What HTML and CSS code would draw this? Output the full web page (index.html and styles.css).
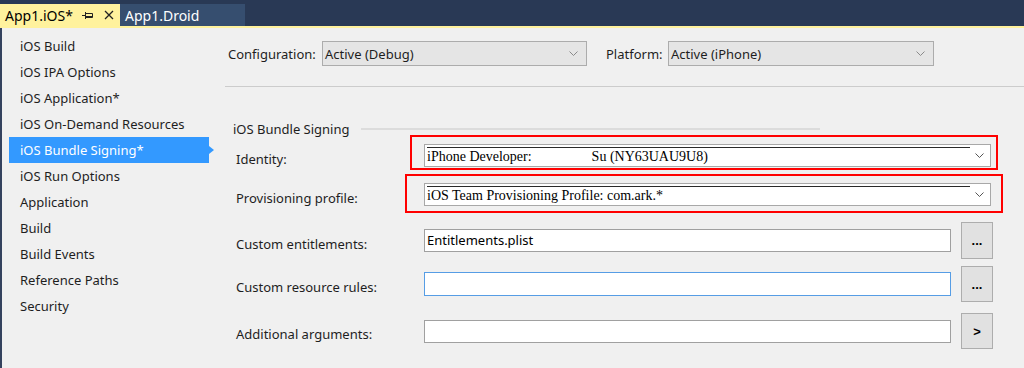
FILE: index.html
```html
<!DOCTYPE html>
<html lang="en">
<head>
    <meta charset="UTF-8">
    <title>App1.iOS - Project Options</title>
    <link rel="stylesheet" href="styles.css">
</head>
<body>

    <!-- Document tabs -->
    <div class="tabbar">
        <div class="tab active">
            <span>App1.iOS*</span>
            <svg class="pin" width="11" height="7" viewBox="0 0 11 7"><path d="M0 3.5H3.5 M3.5 0V7 M3.5 1.5H10.5V5.5H3.5" fill="none" stroke="#222" stroke-width="1"/><path d="M3.5 4.5H10.5" stroke="#222"/></svg>
            <svg class="close" width="10" height="10" viewBox="0 0 10 10"><path d="M1 1L9 9M9 1L1 9" stroke="#222" stroke-width="1.3"/></svg>
        </div>
        <div class="tab">App1.Droid</div>
    </div>

    <div class="page">
        <!-- Left navigation -->
        <ul class="nav">
            <li>iOS Build</li>
            <li>iOS IPA Options</li>
            <li>iOS Application*</li>
            <li>iOS On-Demand Resources</li>
            <li class="selected">iOS Bundle Signing*</li>
            <li>iOS Run Options</li>
            <li>Application</li>
            <li>Build</li>
            <li>Build Events</li>
            <li>Reference Paths</li>
            <li>Security</li>
        </ul>

        <div class="content">
            <!-- Configuration / Platform bar -->
            <div class="config">
                <span class="config-label">Configuration:</span>
                <div class="dropdown dropdown-config">
                    <span>Active (Debug)</span>
                    <svg width="9" height="5" viewBox="0 0 9 5"><path d="M0.5 0.5L4.5 4.5L8.5 0.5" fill="none" stroke="#8a8a8a"/></svg>
                </div>
                <span class="config-label platform-label">Platform:</span>
                <div class="dropdown dropdown-platform">
                    <span>Active (iPhone)</span>
                    <svg width="9" height="5" viewBox="0 0 9 5"><path d="M0.5 0.5L4.5 4.5L8.5 0.5" fill="none" stroke="#8a8a8a"/></svg>
                </div>
            </div>

            <!-- Bundle signing group -->
            <div class="group">
                <div class="group-title">
                    <span>iOS Bundle Signing</span>
                    <i class="rule"></i>
                </div>

                <div class="form">
                    <div class="row row-identity">
                        <label>Identity:</label>
                        <div class="combo">
                            <span class="combo-text">iPhone Developer:<span class="gap"></span>Su (NY63UAU9U8)</span>
                            <svg width="9" height="5" viewBox="0 0 9 5"><path d="M0.5 0.5L4.5 4.5L8.5 0.5" fill="none" stroke="#555"/></svg>
                            <span class="mark mark-identity"></span>
                        </div>
                    </div>

                    <div class="row row-profile">
                        <label>Provisioning profile:</label>
                        <div class="combo">
                            <span class="combo-text">iOS Team Provisioning Profile: com.ark.*</span>
                            <svg width="9" height="5" viewBox="0 0 9 5"><path d="M0.5 0.5L4.5 4.5L8.5 0.5" fill="none" stroke="#555"/></svg>
                            <span class="mark mark-profile"></span>
                        </div>
                    </div>

                    <div class="row row-entitlements">
                        <label>Custom entitlements:</label>
                        <div class="field">Entitlements.plist</div>
                        <button class="browse">...</button>
                    </div>

                    <div class="row row-rules">
                        <label>Custom resource rules:</label>
                        <div class="field focused"></div>
                        <button class="browse">...</button>
                    </div>

                    <div class="row row-args">
                        <label>Additional arguments:</label>
                        <div class="field"></div>
                        <button class="browse">&gt;</button>
                    </div>
                </div>
            </div>
        </div>
    </div>

</body>
</html>
```

FILE: styles.css
```css
body {
    margin: 0;
    font-family: 'Noto Sans', sans-serif;
    font-size: 13px;
    color: #1e1e1e;
    background-color: #f0f0f0;
    overflow: hidden;
}

/* Document tabs */
.tabbar {
    height: 28px;
    box-sizing: border-box;
    padding-top: 4px;
    background-color: #293955;
    border-bottom: 2px solid #fff29d;
    display: flex;
    align-items: stretch;
}
.tab {
    display: flex;
    align-items: center;
    padding: 0 0 0 5px;
    font-size: 14px;
    color: #fff;
    background-color: #364e6f;
    width: 125px;
    box-sizing: border-box;
}
.tab.active {
    background-color: #fff29d;
    color: #000;
    width: 120px;
}
.tab .pin {
    margin-left: 9px;
}
.tab .close {
    margin-left: 11px;
}

/* Page body */
.page {
    display: flex;
    height: 340px;
    border-left: 2px solid #34425e;
}

/* Left navigation */
.nav {
    list-style: none;
    margin: 0;
    padding: 5px 0 0 0;
    width: 210px;
    flex-shrink: 0;
}
.nav li {
    position: relative;
    height: 26px;
    line-height: 26px;
    width: 200px;
    margin-left: 7px;
    padding-left: 11px;
    box-sizing: border-box;
    white-space: nowrap;
}
.nav li.selected {
    background-color: #3399ff;
    color: #fff;
}
.nav li.selected::after {
    content: '';
    position: absolute;
    right: -5px;
    top: 9px;
    border-top: 4px solid transparent;
    border-bottom: 4px solid transparent;
    border-left: 5px solid #3399ff;
}

.content {
    flex: 1;
}

/* Configuration bar */
.config {
    display: flex;
    align-items: center;
    margin-left: 13px;
    padding: 13px 0 20px 3px;
    border-bottom: 1px solid #cccccc;
}
.config-label {
    width: 94px;
    flex-shrink: 0;
}
.platform-label {
    width: 62px;
    margin-left: 19px;
}
.dropdown {
    height: 25px;
    box-sizing: border-box;
    border: 1px solid #acacac;
    background-color: #e5e5e5;
    display: flex;
    align-items: center;
    justify-content: space-between;
    padding: 0 8px 0 2px;
}
.dropdown-config {
    width: 265px;
}
.dropdown-platform {
    width: 266px;
}

/* Group */
.group {
    margin-top: 34px;
    padding-left: 21px;
}
.group-title {
    display: flex;
    align-items: center;
    width: 587px;
    height: 16px;
    line-height: 16px;
}
.group-title .rule {
    flex: 1;
    height: 2px;
    margin-left: 11px;
    background-color: #dcdcdc;
}

.form {
    padding-left: 3px;
}
.row {
    display: flex;
    align-items: center;
}
.row label {
    width: 188px;
    flex-shrink: 0;
    padding-top: 6px;
    line-height: 16px;
}
.row-identity {
    margin-top: 7px;
}
.row-profile {
    margin-top: 16px;
}
.row-entitlements {
    margin-top: 16px;
}
.row-rules {
    margin-top: 7px;
}
.row-args {
    margin-top: 11px;
}

/* Signing combo boxes */
.combo {
    position: relative;
    width: 567px;
    height: 23px;
    box-sizing: border-box;
    border: 1px solid #a8a8a8;
    background-color: #fff;
    display: flex;
    align-items: center;
    padding-left: 2px;
}
.combo-text {
    flex: 1;
    margin-right: 5px;
    padding-top: 1px;
    border-top: 1px solid #2a2a2a;
    font-family: 'Liberation Serif', serif;
    font-size: 14px;
    line-height: 16px;
    color: #000;
    white-space: nowrap;
}
.combo-text .gap {
    display: inline-block;
    width: 60px;
}
.combo svg {
    margin-right: 6px;
}

/* Red annotation boxes */
.mark {
    position: absolute;
    border: 2px solid #f00;
    box-sizing: border-box;
}
.mark-identity {
    top: -10px;
    left: -15px;
    right: -8px;
    bottom: -4px;
}
.mark-profile {
    top: -10px;
    left: -20px;
    right: -13px;
    bottom: -8px;
}

/* Text fields and browse buttons */
.field {
    width: 527px;
    height: 23px;
    box-sizing: border-box;
    border: 1px solid #a0a0a0;
    background-color: #fff;
    padding-left: 2px;
    line-height: 21px;
    color: #000;
}
.field.focused {
    height: 24px;
    border-color: #569de5;
}
.browse {
    width: 32px;
    height: 37px;
    margin-left: 10px;
    padding: 0;
    border: 1px solid #adadad;
    background-color: #e1e1e1;
    font-family: 'Liberation Sans', sans-serif;
    font-size: 13px;
    font-weight: bold;
    color: #000;
}
.row-rules .browse,
.row-args .browse {
    height: 36px;
}
```
